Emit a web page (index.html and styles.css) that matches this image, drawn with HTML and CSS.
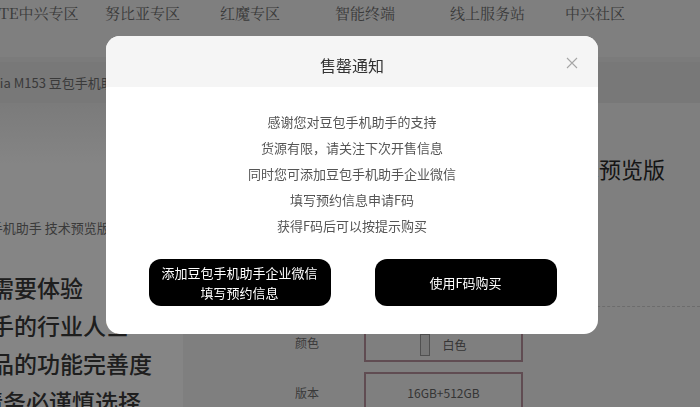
FILE: index.html
```html
<!DOCTYPE html>
<html lang="zh-CN">
<head>
<meta charset="utf-8">
<title>售罄通知</title>
<link rel="stylesheet" href="styles.css">
</head>
<body>
<div class="page">
  <nav class="nav">
    <a class="nav-item">ZTE中兴专区</a>
    <a class="nav-item">努比亚专区</a>
    <a class="nav-item">红魔专区</a>
    <a class="nav-item">智能终端</a>
    <a class="nav-item">线上服务站</a>
    <a class="nav-item">中兴社区</a>
  </nav>
  <div class="crumb">nubia M153 豆包手机助手 技术预览版</div>
  <div class="main">
    <div class="left">
      <div class="left-sub">nubia M153 豆包手机助手 技术预览版</div>
      <div class="notice">
        <p>仅面向需要体验</p>
        <p>手机助手的行业人士</p>
        <p>鉴于产品的功能完善度</p>
        <p class="notice-last">有限，请务必谨慎选择</p>
      </div>
    </div>
    <div class="right">
      <h1 class="title">nubia M153 豆包手机助手 技术预览版</h1>
      <div class="divider"></div>
      <div class="spec">
        <div class="spec-label">颜色</div>
        <div class="spec-box spec-box-color"><span class="swatch"></span><span>白色</span></div>
      </div>
      <div class="spec">
        <div class="spec-label">版本</div>
        <div class="spec-box">16GB+512GB</div>
      </div>
    </div>
  </div>
</div>

<div class="mask">
  <div class="modal">
    <div class="modal-head">
      <span class="modal-title">售罄通知</span>
      <button class="close" aria-label="关闭">
        <svg width="12" height="12" viewBox="0 0 12 12"><path d="M1 1 L11 11 M11 1 L1 11" stroke="#a6a6a6" stroke-width="1.1" fill="none"/></svg>
      </button>
    </div>
    <div class="modal-body">
      <p>感谢您对豆包手机助手的支持</p>
      <p>货源有限，请关注下次开售信息</p>
      <p>同时您可添加豆包手机助手企业微信</p>
      <p>填写预约信息申请F码</p>
      <p>获得F码后可以按提示购买</p>
      <div class="actions">
        <button class="btn">添加豆包手机助手企业微信<br>填写预约信息</button>
        <button class="btn">使用F码购买</button>
      </div>
    </div>
  </div>
</div>
</body>
</html>
```

FILE: styles.css
```css
* { box-sizing: border-box; }

html, body {
  margin: 0;
  padding: 0;
  height: 100%;
}

body {
  overflow: hidden;
  background: #f4f4f4;
  font-family: "Noto Sans CJK SC", "Noto Sans", sans-serif;
}

.page {
  margin-left: -130px;
  width: 830px;
}

/* top navigation */
.nav {
  display: flex;
  height: 57px;
  padding-left: 120px;
  font-family: "Noto Serif CJK SC", "Liberation Serif", "Noto Sans CJK SC", serif;
  font-size: 15px;
  line-height: 26px;
  color: #6f6f6f;
}

.nav-item {
  width: 115px;
  flex: none;
  white-space: nowrap;
}

/* breadcrumb */
.crumb {
  height: 46px;
  padding-left: 106px;
  background: #e6e6e6;
  border-top: 5px solid #ececec;
  font-size: 13px;
  line-height: 41px;
  color: #707070;
  white-space: nowrap;
}

.main {
  display: flex;
}

.left {
  width: 313px;
  flex: none;
  height: 310px;
  background: linear-gradient(#ebebeb, #ffffff 60px);
  overflow: hidden;
}

.left-sub {
  margin-top: 115px;
  padding-left: 21px;
  font-size: 13px;
  line-height: 20px;
  color: #707070;
  white-space: nowrap;
}

.notice {
  margin-top: 30px;
  padding-left: 52px;
}

.notice p {
  margin: 0;
  font-size: 23px;
  line-height: 38px;
  font-weight: 500;
  color: #3a3a3a;
  white-space: nowrap;
}

.notice .notice-last {
  margin-left: -11px;
}

.right {
  flex: 1;
  min-width: 0;
}

.title {
  margin: 50px 0 0;
  padding-right: 35px;
  text-align: right;
  font-size: 22px;
  line-height: 30px;
  font-weight: 400;
  color: #2a2a2a;
  white-space: nowrap;
}

.divider {
  margin-top: 123px;
  border-top: 1px dashed #cfcfcf;
}

.spec {
  display: flex;
  align-items: center;
  gap: 20px;
  padding-left: 87px;
  margin-top: 15px;
}

.spec + .spec {
  margin-top: 10px;
}

.spec-label {
  width: 74px;
  text-align: center;
  font-size: 12px;
  color: #707070;
}

.spec-box {
  width: 159px;
  height: 40px;
  border: 2px solid #b8939d;
  display: flex;
  align-items: center;
  justify-content: center;
  gap: 12px;
  font-size: 12px;
  color: #666;
}

.spec-box-color {
  padding-top: 5px;
}

.swatch {
  width: 10px;
  height: 22px;
  border: 1px solid #9a9a9a;
  background: #e2e2e2;
}

/* modal */
.mask {
  position: fixed;
  inset: 0;
  background: rgba(0, 0, 0, 0.48);
  display: flex;
  justify-content: center;
  align-items: flex-start;
  padding-top: 36px;
  padding-left: 4px;
}

.modal {
  position: relative;
  width: 492px;
  background: #fff;
  border-radius: 14px;
  overflow: hidden;
}

.modal-head {
  background: #f5f5f5;
  height: 51px;
  padding-top: 18px;
  text-align: center;
}

.modal-title {
  display: block;
  font-size: 16px;
  line-height: 22px;
  color: #333;
}

.close {
  position: absolute;
  top: 21px;
  right: 20px;
  width: 12px;
  height: 12px;
  padding: 0;
  border: 0;
  background: none;
  display: flex;
}

.modal-body {
  padding: 22px 0 28px;
  text-align: center;
}

.modal-body p {
  margin: 0;
  font-size: 13px;
  line-height: 26px;
  color: #555;
}

.actions {
  display: flex;
  justify-content: center;
  gap: 44px;
  margin-top: 20px;
  padding-left: 1px;
}

.btn {
  width: 182px;
  height: 47px;
  border: 0;
  border-radius: 12px;
  background: #000;
  color: #fff;
  font-family: "Noto Sans CJK SC", "Noto Sans", sans-serif;
  font-size: 13px;
  line-height: 20px;
  padding: 0;
}
```
